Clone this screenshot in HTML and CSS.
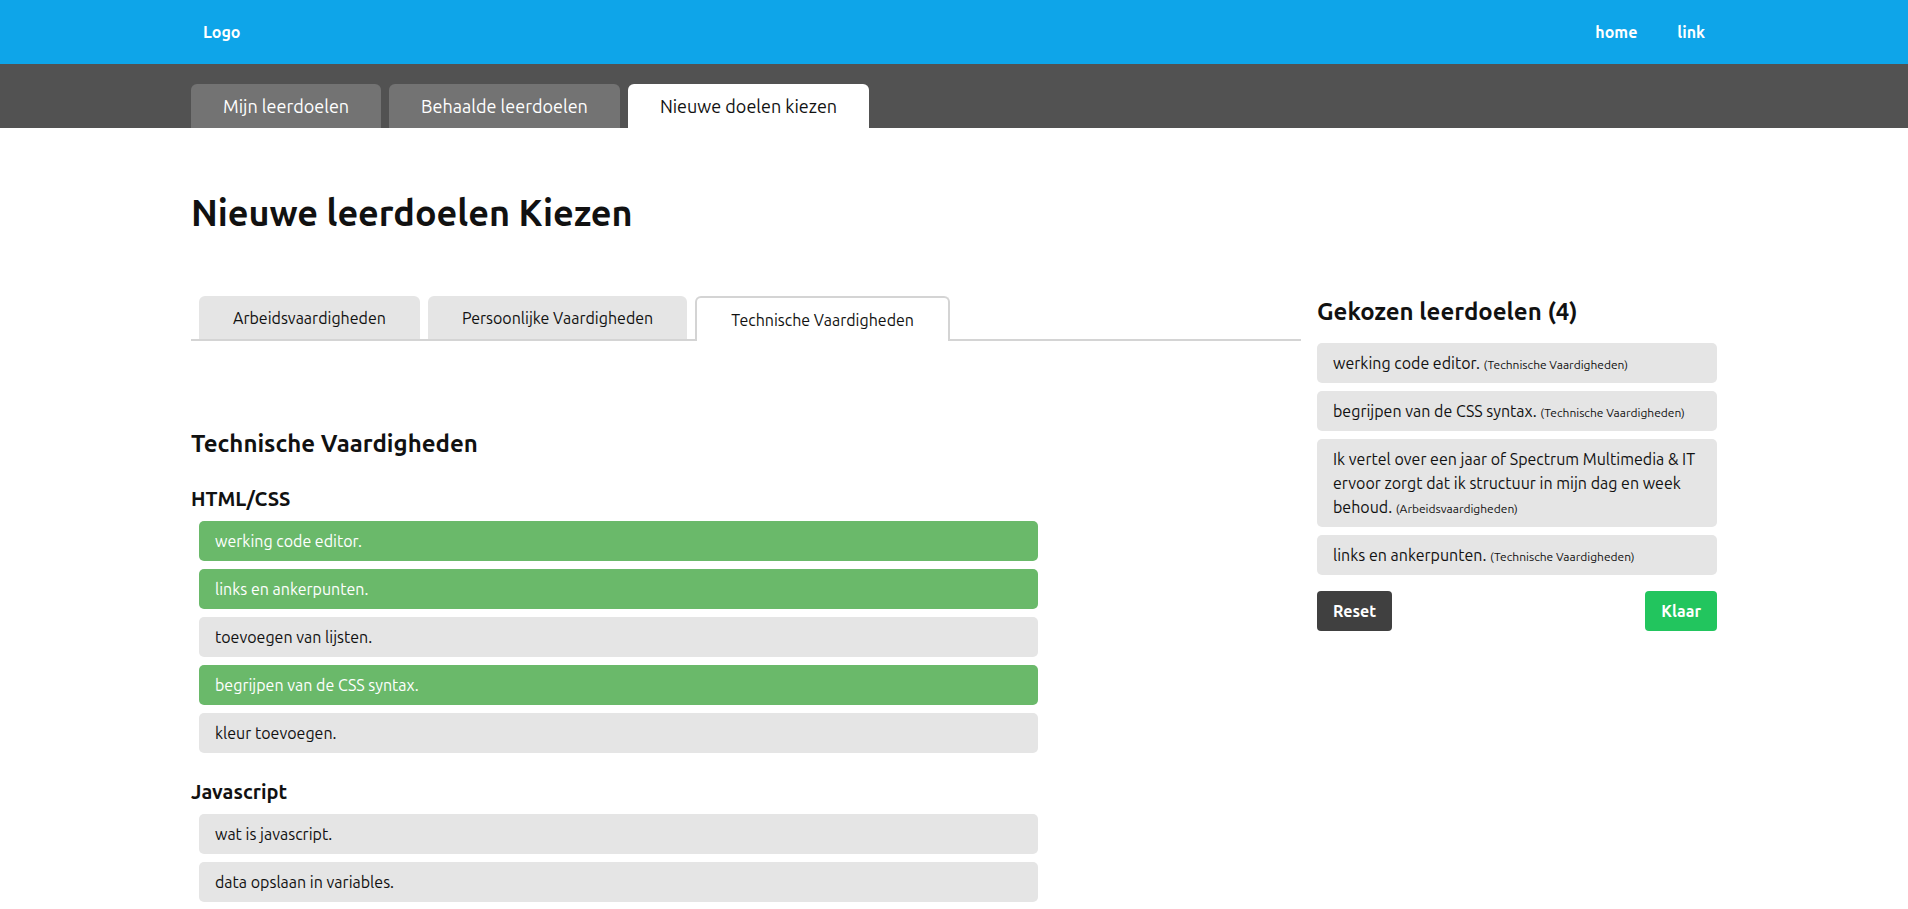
FILE: index.html
```html
<!DOCTYPE html>
<html lang="nl">
<head>
<meta charset="utf-8">
<title>Nieuwe leerdoelen Kiezen</title>
<link rel="stylesheet" href="styles.css">
</head>
<body>
<header class="topbar">
  <div class="container topbar-inner">
    <a class="logo" href="#">Logo</a>
    <nav class="topnav">
      <a href="#">home</a>
      <a href="#">link</a>
    </nav>
  </div>
</header>
<div class="tabbar">
  <div class="container tabs">
    <a class="tab" href="#">Mijn leerdoelen</a>
    <a class="tab" href="#">Behaalde leerdoelen</a>
    <a class="tab active" href="#">Nieuwe doelen kiezen</a>
  </div>
</div>
<main class="container">
  <h1 class="page-title">Nieuwe leerdoelen Kiezen</h1>
  <div class="layout">
    <section class="choose">
      <div class="subtabs">
        <button class="subtab">Arbeidsvaardigheden</button>
        <button class="subtab">Persoonlijke Vaardigheden</button>
        <button class="subtab active">Technische Vaardigheden</button>
      </div>
      <h2 class="section-title">Technische Vaardigheden</h2>
      <div class="group">
        <h3 class="group-title">HTML/CSS</h3>
        <ul class="goals">
          <li class="goal selected">werking code editor.</li>
          <li class="goal selected">links en ankerpunten.</li>
          <li class="goal">toevoegen van lijsten.</li>
          <li class="goal selected">begrijpen van de CSS syntax.</li>
          <li class="goal">kleur toevoegen.</li>
        </ul>
      </div>
      <div class="group">
        <h3 class="group-title">Javascript</h3>
        <ul class="goals">
          <li class="goal">wat is javascript.</li>
          <li class="goal">data opslaan in variables.</li>
          <li class="goal">functies schrijven.</li>
        </ul>
      </div>
    </section>
    <aside class="chosen">
      <h2 class="chosen-title">Gekozen leerdoelen (4)</h2>
      <ul class="chosen-list">
        <li class="chosen-item">werking code editor. <small>(Technische Vaardigheden)</small></li>
        <li class="chosen-item">begrijpen van de CSS syntax. <small>(Technische Vaardigheden)</small></li>
        <li class="chosen-item">Ik vertel over een jaar of Spectrum Multimedia &amp; IT ervoor zorgt dat ik structuur in mijn dag en week behoud. <small>(Arbeidsvaardigheden)</small></li>
        <li class="chosen-item">links en ankerpunten. <small>(Technische Vaardigheden)</small></li>
      </ul>
      <div class="actions">
        <button class="btn btn-reset">Reset</button>
        <button class="btn btn-done">Klaar</button>
      </div>
    </aside>
  </div>
</main>
</body>
</html>
```

FILE: styles.css
```css
* { box-sizing: border-box; }
html, body { margin: 0; padding: 0; }
body {
  font-family: "Ubuntu", "Open Sans", "Noto Sans", sans-serif;
  color: #111;
  background: #fff;
  font-size: 16px;
  line-height: 24px;
  overflow: hidden;
}
a { text-decoration: none; color: inherit; }
ul { list-style: none; margin: 0; padding: 0; }
h1, h2, h3 { margin: 0; }
button { font-family: inherit; border: 0; cursor: pointer; }

.container {
  width: 1526px;
  margin: 0 auto;
}

.topbar {
  background: #0ea5e9;
  height: 64px;
}
.topbar-inner {
  height: 64px;
  display: flex;
  align-items: center;
  justify-content: space-between;
  padding: 0 12px;
}
.logo {
  color: #fff;
  font-weight: 700;
  font-size: 16px;
}
.topnav {
  display: flex;
  gap: 40px;
}
.topnav a {
  color: #fff;
  font-weight: 700;
  font-size: 16px;
}

.tabbar {
  background: #525252;
  height: 64px;
  padding-top: 20px;
}
.tabs {
  display: flex;
  gap: 8px;
}
.tab {
  height: 44px;
  display: flex;
  align-items: center;
  padding: 0 32px;
  background: #737373;
  color: #fff;
  font-size: 18px;
  border-radius: 6px 6px 0 0;
}
.tab.active {
  background: #fff;
  color: #111;
}

.page-title {
  font-size: 36px;
  line-height: 40px;
  font-weight: 600;
  margin-top: 65px;
  margin-bottom: 63px;
}

.layout {
  display: grid;
  grid-template-columns: 1110px 400px;
  gap: 16px;
  align-items: start;
}

.subtabs {
  display: flex;
  gap: 8px;
  padding-left: 8px;
  border-bottom: 2px solid #d4d4d4;
  height: 45px;
}
.subtab {
  height: 43px;
  padding: 0 34px;
  background: #e5e5e5;
  color: #111;
  font-size: 16px;
  border-radius: 6px 6px 0 0;
}
.subtab.active {
  background: #fff;
  border: 2px solid #d4d4d4;
  border-bottom: 0;
  height: 45px;
  margin-bottom: -2px;
}

.section-title {
  font-size: 24px;
  line-height: 32px;
  font-weight: 600;
  margin-top: 87px;
}
.group { margin-top: 25px; }
.group-title {
  font-size: 20px;
  line-height: 28px;
  font-weight: 600;
  margin-bottom: 8px;
}
.goals {
  display: flex;
  flex-direction: column;
  gap: 8px;
  padding-left: 8px;
  width: 847px;
}
.goal {
  height: 40px;
  display: flex;
  align-items: center;
  padding: 0 16px;
  background: #e5e5e5;
  border-radius: 5px;
  font-size: 16px;
  color: #111;
}
.goal.selected {
  background: #6ab96a;
  color: #fff;
}

.chosen-title {
  font-size: 24px;
  line-height: 32px;
  font-weight: 700;
  margin-bottom: 15px;
}
.chosen-list {
  display: flex;
  flex-direction: column;
  gap: 8px;
}
.chosen-item {
  background: #e5e5e5;
  border-radius: 5px;
  padding: 8px 16px;
  font-size: 16px;
  line-height: 24px;
  color: #111;
}
.chosen-item small {
  font-size: 12px;
  line-height: 12px;
}
.actions {
  display: flex;
  justify-content: space-between;
  margin-top: 16px;
}
.btn {
  height: 40px;
  padding: 0 16px;
  font-size: 16px;
  font-weight: 700;
  color: #fff;
  border-radius: 4px;
}
.btn-reset { background: #404040; }
.btn-done { background: #22c55e; }
```
